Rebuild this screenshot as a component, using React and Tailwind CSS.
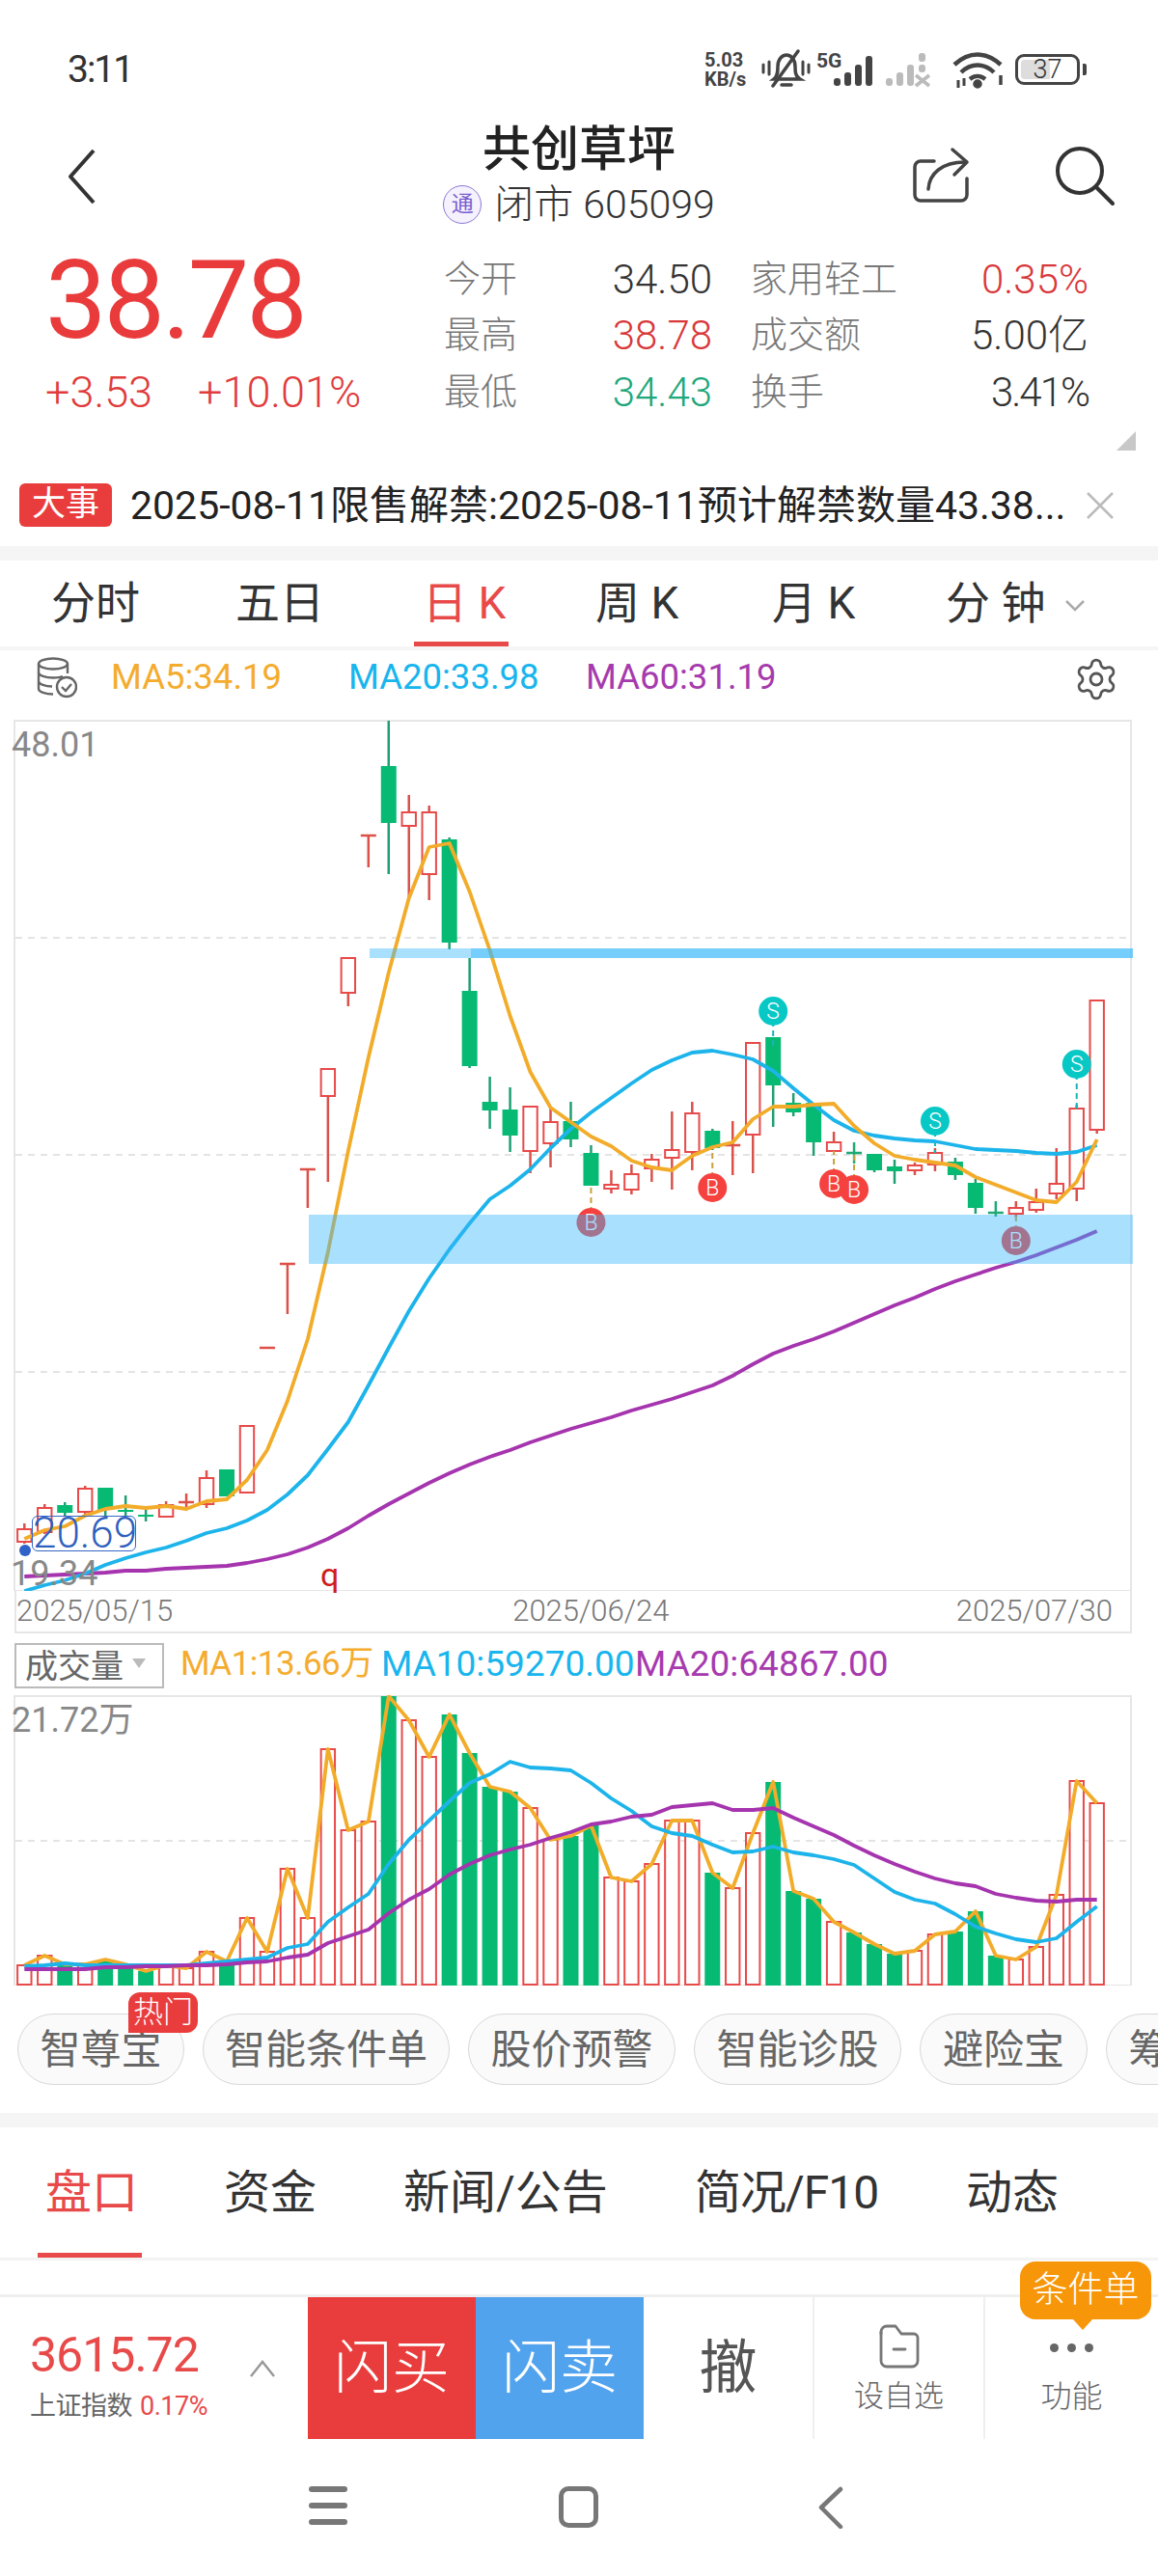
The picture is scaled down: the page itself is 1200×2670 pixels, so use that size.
import React from "react";
import { Settings } from "lucide-react";

const RED = "#e84a4a";
const GREEN = "#07ba73";
const ORANGE = "#f2ac2a";
const BLUE = "#1cb4ea";
const PURPLE = "#a534ae";

const X = (i) => 25.3 + 20.97 * i;

// kind, body top, body bottom, wick top, wick bottom
const candles = [
  ["r", 1585, 1598, 1579, 1600],
  ["r", 1563, 1588, 1559, 1590],
  ["g", 1560, 1568, 1557, 1572],
  ["r", 1543, 1567, 1540, 1571],
  ["g", 1542, 1565, 1542, 1571],
  ["g", 1565, 1567, 1550, 1571],
  ["g", 1570, 1572, 1563, 1577],
  ["r", 1560, 1572, 1556, 1572],
  ["c", 1557, 1558, 1548, 1563],
  ["r", 1532, 1559, 1524, 1563],
  ["g", 1523, 1551, 1523, 1551],
  ["r", 1478, 1547, 1478, 1547],
  ["c", 1397, 1398, 1397, 1398],
  ["c", 1310, 1311, 1310, 1362],
  ["c", 1212, 1213, 1212, 1252],
  ["r", 1108, 1136, 1108, 1225],
  ["r", 993, 1029, 993, 1043],
  ["c", 866, 867, 866, 899],
  ["g", 794, 853, 747, 906],
  ["r", 842, 856, 824, 930],
  ["r", 842, 906, 835, 933],
  ["g", 870, 977, 868, 984],
  ["g", 1027, 1105, 993, 1107],
  ["g", 1142, 1151, 1116, 1170],
  ["g", 1150, 1177, 1127, 1194],
  ["r", 1147, 1193, 1147, 1216],
  ["r", 1163, 1185, 1148, 1210],
  ["g", 1162, 1181, 1142, 1189],
  ["g", 1195, 1229, 1187, 1229],
  ["r", 1228, 1232, 1213, 1237],
  ["r", 1217, 1233, 1207, 1238],
  ["r", 1202, 1211, 1196, 1225],
  ["r", 1192, 1200, 1152, 1233],
  ["r", 1154, 1194, 1142, 1213],
  ["g", 1172, 1190, 1170, 1192],
  ["c", 1187, 1188, 1162, 1218],
  ["r", 1081, 1176, 1081, 1216],
  ["g", 1075, 1125, 1075, 1168],
  ["g", 1143, 1153, 1133, 1157],
  ["g", 1143, 1184, 1143, 1198],
  ["r", 1184, 1193, 1173, 1193],
  ["k", 1195, 1196, 1184, 1206],
  ["g", 1196, 1213, 1196, 1215],
  ["g", 1209, 1214, 1202, 1227],
  ["r", 1208, 1213, 1205, 1218],
  ["r", 1195, 1207, 1190, 1214],
  ["g", 1204, 1218, 1200, 1223],
  ["g", 1226, 1252, 1222, 1258],
  ["k", 1257, 1258, 1245, 1261],
  ["r", 1252, 1258, 1245, 1262],
  ["r", 1246, 1254, 1232, 1257],
  ["r", 1227, 1237, 1190, 1243],
  ["r", 1149, 1232, 1145, 1245],
  ["r", 1037, 1171, 1037, 1175],
];

const ma5 = [1595, 1586, 1582, 1571, 1564, 1561, 1563, 1561, 1564, 1556, 1554, 1534, 1503, 1452, 1388, 1298, 1193, 1096, 1008, 931, 878, 874, 924, 985, 1053, 1111, 1148, 1163, 1178, 1188, 1203, 1210, 1213, 1198, 1189, 1184, 1160, 1147, 1147, 1145, 1144, 1167, 1185, 1198, 1202, 1205, 1208, 1220, 1228, 1236, 1244, 1246, 1225, 1181];
const ma20 = [1649, 1643, 1638, 1631, 1622, 1615, 1609, 1604, 1597, 1589, 1584, 1576, 1565, 1549, 1529, 1502, 1474, 1436, 1397, 1359, 1325, 1295, 1268, 1243, 1229, 1212, 1190, 1170, 1153, 1138, 1123, 1109, 1099, 1091, 1089, 1093, 1098, 1110, 1128, 1145, 1161, 1172, 1177, 1180, 1182, 1183, 1187, 1191, 1192, 1193, 1195, 1196, 1194, 1187];
const ma60 = [1634, 1633, 1632, 1631, 1630, 1628, 1628, 1626, 1625, 1624, 1623, 1620, 1616, 1611, 1604, 1595, 1584, 1571, 1559, 1548, 1537, 1527, 1518, 1510, 1503, 1495, 1488, 1481, 1475, 1469, 1462, 1456, 1450, 1443, 1436, 1426, 1414, 1403, 1395, 1388, 1380, 1371, 1362, 1353, 1345, 1336, 1328, 1321, 1314, 1308, 1301, 1293, 1285, 1276];

// volume tops, read off the chart
const vol = [
  ["r", 2037], ["r", 2027], ["g", 2036], ["r", 2036], ["g", 2031], ["g", 2036], ["g", 2043], ["r", 2037], ["r", 2040],
  ["r", 2023], ["g", 2033], ["r", 1988], ["r", 2023], ["r", 1937], ["r", 1988], ["r", 1813], ["r", 1897], ["r", 1888],
  ["g", 1758], ["r", 1783], ["r", 1821], ["g", 1777], ["g", 1817], ["g", 1852], ["g", 1857], ["r", 1874], ["r", 1907],
  ["g", 1903], ["g", 1892], ["r", 1946], ["r", 1950], ["r", 1932], ["r", 1887], ["r", 1887], ["g", 1941], ["r", 1957],
  ["r", 1900], ["g", 1847], ["g", 1960], ["g", 1968], ["r", 1992], ["g", 2003], ["g", 2015], ["g", 2025], ["r", 2022],
  ["r", 2005], ["g", 2002], ["g", 1981], ["g", 2027], ["r", 2031], ["r", 2018], ["r", 1964], ["r", 1846], ["r", 1869],
];
const vma10 = [2038, 2037, 2035, 2037, 2037, 2037, 2037, 2037, 2037, 2035, 2033, 2031, 2029, 2019, 2015, 1992, 1977, 1963, 1932, 1907, 1887, 1867, 1848, 1839, 1826, 1832, 1833, 1835, 1848, 1864, 1877, 1893, 1900, 1903, 1912, 1920, 1919, 1914, 1920, 1923, 1927, 1933, 1947, 1961, 1969, 1973, 1984, 1997, 2004, 2010, 2013, 2009, 1992, 1976];
const vma20 = [2041, 2041, 2041, 2041, 2039, 2039, 2038, 2038, 2037, 2037, 2036, 2034, 2033, 2029, 2026, 2014, 2007, 2000, 1983, 1969, 1958, 1943, 1932, 1923, 1917, 1912, 1905, 1899, 1891, 1888, 1883, 1881, 1873, 1871, 1869, 1876, 1876, 1874, 1884, 1893, 1902, 1913, 1923, 1932, 1940, 1947, 1952, 1955, 1963, 1967, 1970, 1971, 1969, 1969];

const line = (ys) => ys.map((y, i) => `${X(i).toFixed(1)},${y}`).join(" ");

function Candle({ c, i }) {
  const [kind, top, bot, wt, wb] = c;
  const x = X(i);
  if (kind === "c" || kind === "k") {
    const col = kind === "c" ? "#dc5048" : "#1faa74";
    return (
      <g stroke={col} strokeWidth="2.5">
        <line x1={x - 8} x2={x + 8} y1={top} y2={top} />
        <line x1={x} x2={x} y1={wt} y2={wb} />
      </g>
    );
  }
  if (kind === "g") {
    return (
      <g>
        <line x1={x} x2={x} y1={wt} y2={wb} stroke="#1f9f72" strokeWidth="2.5" />
        <rect x={x - 8} y={top} width="16" height={bot - top} fill={GREEN} />
      </g>
    );
  }
  return (
    <g>
      <line x1={x} x2={x} y1={wt} y2={wb} stroke="#d8524c" strokeWidth="2.5" />
      <rect x={x - 7.2} y={top} width="14.4" height={bot - top} fill="#fff" stroke={RED} strokeWidth="2" />
    </g>
  );
}

function Marker({ i, y, stemTo, t }) {
  const x = X(i);
  const col = t === "S" ? "#08c8c6" : "#f5423f";
  return (
    <g>
      <line x1={x} x2={x} y1={y} y2={stemTo} stroke={t === "S" ? "#19b5bb" : "#c9a13c"} strokeWidth="2" strokeDasharray="6 4" />
      <circle cx={x} cy={y} r="15" fill={col} />
      <text x={x} y={y + 8} textAnchor="middle" fontSize="23" fill="#fff" fontWeight="300">{t}</text>
    </g>
  );
}

function KChart() {
  return (
    <div className="relative h-[903px]">
      <svg width="1200" height="903" viewBox="0 746 1200 903" className="block">
        <path d="M15 1649V747H1172V1649H15" fill="none" stroke="#e6e6e6" strokeWidth="2" />
        {[972, 1197, 1422].map((y) => (
          <line key={y} x1="16" x2="1171" y1={y} y2={y} stroke="#dcdcdc" strokeWidth="1.5" strokeDasharray="7 6" />
        ))}
        {candles.map((c, i) => (
          <Candle key={i} c={c} i={i} />
        ))}
        <Marker i={28} y={1267} stemTo={1229} t="B" />
        <Marker i={34} y={1231} stemTo={1190} t="B" />
        <Marker i={40} y={1227} stemTo={1193} t="B" />
        <Marker i={41} y={1233} stemTo={1196} t="B" />
        <Marker i={49} y={1286} stemTo={1258} t="B" />
        <Marker i={37} y={1048} stemTo={1085} t="S" />
        <Marker i={45} y={1162} stemTo={1195} t="S" />
        <Marker i={52} y={1103} stemTo={1149} t="S" />
        <polyline points={line(ma60)} fill="none" stroke={PURPLE} strokeWidth="3.8" strokeLinejoin="round" />
        <polyline points={line(ma20)} fill="none" stroke={BLUE} strokeWidth="3.8" strokeLinejoin="round" />
        <polyline points={line(ma5)} fill="none" stroke={ORANGE} strokeWidth="3.8" strokeLinejoin="round" />
        {/* support and resistance zones sit over the candles */}
        <rect x="320" y="1259" width="854" height="51" fill="#35b7fb" opacity="0.43" />
        <rect x="383" y="983" width="791" height="10" fill="#35b7fb" opacity="0.43" />
        <rect x="488" y="983" width="686" height="10" fill="#35b7fb" opacity="0.43" />
        <circle cx="26" cy="1607" r="6" fill="#2f62c8" />
      </svg>
      <div className="absolute left-[12px] top-[4px] text-[36px] leading-[44px] text-[#888]">48.01</div>
      <div className="absolute left-[11px] top-[867px] h-[36px] text-[36px] leading-[36px] text-[#888]">19.34</div>
      <div className="absolute left-[33px] top-[825px] h-[37px] w-[108px] rounded-[6px] border border-[#3566c4] text-center text-[44px] leading-[35px] font-light text-[#2f5fbe]">20.69</div>
      <div className="absolute left-[332px] top-[868px] text-[34px] leading-[36px] text-[#d01c1c]">q</div>
    </div>
  );
}

function VolumeChart() {
  return (
    <div className="relative h-[301px]">
      <svg width="1200" height="301" viewBox="0 1757 1200 301" className="block">
        <path d="M15 2058V1758H1172V2058H15" fill="none" stroke="#e6e6e6" strokeWidth="2" />
        <line x1="16" x2="1171" y1="1908" y2="1908" stroke="#dcdcdc" strokeWidth="1.5" strokeDasharray="7 6" />
        {vol.map(([k, top], i) =>
          k === "g" ? (
            <rect key={i} x={X(i) - 8} y={top} width="16" height={2058 - top} fill={GREEN} />
          ) : (
            <rect key={i} x={X(i) - 7.2} y={top} width="14.4" height={2057 - top} fill="#fff" stroke={RED} strokeWidth="2" />
          )
        )}
        <polyline points={line(vol.map((v) => v[1]))} fill="none" stroke={ORANGE} strokeWidth="3.8" strokeLinejoin="round" />
        <polyline points={line(vma10)} fill="none" stroke={BLUE} strokeWidth="3.8" strokeLinejoin="round" />
        <polyline points={line(vma20)} fill="none" stroke={PURPLE} strokeWidth="3.8" strokeLinejoin="round" />
      </svg>
      <div className="absolute left-[12px] top-[4px] text-[36px] leading-[44px] text-[#888]">21.72万</div>
    </div>
  );
}

function StatusBar() {
  return (
    <div className="flex h-[100px] items-start pt-[51px] pl-[70px] text-[#333]">
      <div className="w-[660px] text-[39px] leading-[42px] tracking-[-2px]">3:11</div>
      <div className="flex h-[42px] items-center">
        <div className="w-[58px] text-[20px] leading-[20px] font-bold text-[#444]">
          <div>5.03</div>
          <div>KB/s</div>
        </div>
        <svg width="52" height="42" viewBox="0 0 52 42" fill="none" stroke="#444" strokeWidth="3.5" strokeLinecap="round">
          <path d="M14 31c4-3 4-8 4-13 0-7 4-12 9-12s9 5 9 12c0 5 0 10 5 13z" />
          <path d="M22 37h10" />
          <path d="M39 2L13 38" />
          <path d="M3 16v8M9 13v13M44 13v13M50 16v8" strokeWidth="3" />
        </svg>
        <div className="relative ml-[6px] h-[38px] w-[68px]">
          <div className="absolute left-[0px] top-[0px] text-[21px] leading-[20px] font-bold text-[#444]">5G</div>
          <svg width="68" height="38" viewBox="0 0 68 38" className="block">
            <rect x="18" y="28" width="7" height="8" rx="3" fill="#444" />
            <rect x="29" y="22" width="7" height="14" rx="3" fill="#444" />
            <rect x="40" y="14" width="7" height="22" rx="3" fill="#444" />
            <rect x="51" y="5" width="7" height="31" rx="3" fill="#444" />
          </svg>
        </div>
        <svg width="56" height="38" viewBox="0 0 56 38" className="ml-[2px]" fill="#bbb">
          <rect x="2" y="28" width="7" height="8" rx="3" />
          <rect x="13" y="22" width="7" height="14" rx="3" />
          <rect x="24" y="14" width="7" height="22" rx="3" />
          <rect x="36" y="14" width="7" height="8" rx="3" />
          <rect x="36" y="2" width="7" height="9" rx="3" />
          <path d="M33 25l14 11M47 25l-14 11" stroke="#bbb" strokeWidth="3.5" />
        </svg>
        <svg width="60" height="42" viewBox="0 0 60 42" fill="none" stroke="#444" strokeWidth="4.5" className="ml-[12px]">
          <path d="M5 16C20 2 38 2 53 16" />
          <path d="M12 24C22 14 36 14 46 24" />
          <path d="M21 31C26 27 32 27 37 31" />
          <circle cx="29" cy="36" r="2.5" fill="#444" />
          <path d="M9 32v8M15 30v8" strokeWidth="3" />
          <path d="M53 27v10" strokeWidth="3.5" />
        </svg>
        <div className="relative ml-[8px] flex h-[32px] w-[67px] items-center justify-center overflow-hidden rounded-[9px] border-[3px] border-[#444]">
          <div className="absolute left-[3px] top-[3px] h-[20px] w-[30px] rounded-l-[4px] bg-[#ddd]" />
          <span className="relative text-[27px] leading-[26px] font-light">37</span>
        </div>
        <div className="ml-[3px] h-[12px] w-[4px] rounded-r-[2px] bg-[#444]" />
      </div>
    </div>
  );
}

function Header() {
  return (
    <div className="relative flex h-[140px] flex-col items-center">
      <div className="mt-[29px] text-[50px] leading-[52px] font-medium text-[#222]">共创草坪</div>
      <div className="mt-[9px] flex h-[44px] items-center">
        <div className="flex h-[40px] w-[40px] items-center justify-center rounded-full border border-[#8d78d8] bg-[#f5f2fd] text-[23px] text-[#7a60d0]">通</div>
        <div className="ml-[13px] text-[41px] leading-[44px] font-light text-[#333]">闭市 605099</div>
      </div>
      <svg width="34" height="60" viewBox="0 0 34 60" fill="none" stroke="#333" strokeWidth="4" className="absolute left-[68px] top-[52px]">
        <path d="M29 4L5 31l24 27" strokeLinejoin="round" />
      </svg>
      <svg width="62" height="62" viewBox="0 0 62 62" fill="none" stroke="#444" strokeWidth="3.5" strokeLinecap="round" strokeLinejoin="round" className="absolute left-[944px] top-[52px]">
        <path d="M24 15H10a6 6 0 0 0-6 6v29a6 6 0 0 0 6 6h42a6 6 0 0 0 6-6V33" />
        <path d="M18 44c1-16 14-28 38-28" />
        <path d="M43 3l15 13-13 13" />
      </svg>
      <svg width="66" height="64" viewBox="0 0 66 64" fill="none" stroke="#333" strokeWidth="4" strokeLinecap="round" className="absolute left-[1092px] top-[50px]">
        <circle cx="27" cy="27" r="23" />
        <path d="M44 44l17 17" />
      </svg>
    </div>
  );
}

function StatRow({ l1, v1, c1, l2, v2, c2 }) {
  return (
    <div className="flex h-[58.500px] items-center text-[38px]">
      <div className="flex w-[278px] items-center justify-between">
        <span className="font-light text-[#777]">{l1}</span>
        <span className={"text-[42px] font-light " + c1}>{v1}</span>
      </div>
      <div className="ml-[40px] flex w-[350px] items-center justify-between">
        <span className="font-light text-[#777]">{l2}</span>
        <span className={"text-[42px] font-light " + c2}>{v2}</span>
      </div>
    </div>
  );
}

function Quote() {
  return (
    <div className="relative flex h-[250px] pt-[20px]">
      <div className="w-[460px] pl-[47px]">
        <div className="mt-[-3px] text-[113px] leading-[110px] tracking-[-3px] text-[#e93b3b]">38.78</div>
        <div className="mt-[14px] flex text-[45px] leading-[52px] font-light text-[#e03c3c]">
          <span className="w-[158px]">+3.53</span>
          <span>+10.01%</span>
        </div>
      </div>
      <div>
        <StatRow l1="今开" v1="34.50" c1="text-[#333]" l2="家用轻工" v2="0.35%" c2="text-[#d9383a]" />
        <StatRow l1="最高" v1="38.78" c1="text-[#d9383a]" l2="成交额" v2="5.00亿" c2="text-[#333]" />
        <StatRow l1="最低" v1="34.43" c1="text-[#1ea77a]" l2="换手" v2="3.41%" c2="tracking-[-2px] text-[#333]" />
      </div>
      <div className="absolute left-[1157px] top-[207px] h-0 w-0 border-b-[20px] border-l-[20px] border-b-[#c8c8c8] border-l-transparent" />
    </div>
  );
}

function Notice() {
  return (
    <div className="flex h-[76px] items-start pt-[11px] pl-[20px]">
      <div className="flex h-[45px] w-[96px] items-center justify-center rounded-[6px] bg-[#e93d3d] text-[35px] text-white">大事</div>
      <div className="ml-[19px] w-[990px] text-[41px] leading-[46px] whitespace-nowrap text-[#222]">2025-08-11限售解禁:2025-08-11预计解禁数量43.38...</div>
      <svg width="30" height="30" viewBox="0 0 30 30" stroke="#bbb" strokeWidth="2.5" className="mt-[8px]">
        <path d="M2 2l26 26M28 2L2 28" />
      </svg>
    </div>
  );
}

function MainTabs() {
  return (
    <div className="relative flex h-[89px] items-center text-[46px] text-[#333]">
      <span className="absolute left-[53px]">分时</span>
      <span className="absolute left-[244px]">五日</span>
      <span className="absolute left-[438px] text-[#e84a4a]">日 K</span>
      <span className="absolute left-[617px]">周 K</span>
      <span className="absolute left-[800px]">月 K</span>
      <span className="absolute left-[980px]">分 钟</span>
      <svg width="22" height="14" viewBox="0 0 22 14" fill="none" stroke="#aaa" strokeWidth="2.5" className="absolute left-[1103px] top-[40px]">
        <path d="M2 2l9 9 9-9" />
      </svg>
      <div className="absolute bottom-0 left-[429px] h-[5px] w-[98px] bg-[#e84a4a]" />
    </div>
  );
}

function MaRow() {
  return (
    <div className="flex h-[72px] items-start pt-[6px] pl-[38px] text-[36.500px] leading-[44px]">
      <svg width="42" height="44" viewBox="0 0 42 44" fill="none" stroke="#666" strokeWidth="2.4">
        <ellipse cx="17" cy="8" rx="15" ry="5.5" />
        <path d="M2 8v26c0 3 7 5.500 15 5.500M32 8v10M2 17c0 3 7 5.500 15 5.500 4 0 8-.5 10-1.500M2 26c0 3 7 5.500 14 5.500" />
        <circle cx="31" cy="32" r="10" />
        <path d="M26 32l4 4 6-7" />
      </svg>
      <span className="ml-[35px] w-[246px] text-[#f4ac2e]">MA5:34.19</span>
      <span className="w-[246px] text-[#18b5ee]">MA20:33.98</span>
      <span className="flex-1 text-[#a63aae]">MA60:31.19</span>
      <Settings size={48} strokeWidth={1.4} color="#555" className="mr-[40px]" />
    </div>
  );
}

function Chip({ label, w, badge }) {
  return (
    <div className={"relative flex h-[74px] shrink-0 items-center justify-center rounded-full border border-[#d8d8d8] bg-[#fafafa] text-[42px] text-[#666] " + w}>
      {label}
      {badge && (
        <div className="absolute left-[114px] top-[-23px] flex h-[42px] w-[72px] items-center justify-center rounded-[12px] rounded-bl-none bg-[#e93d3d] text-[31px] font-light text-white">热门</div>
      )}
    </div>
  );
}

function InfoTabs() {
  return (
    <div className="relative h-[135px] text-[48px] leading-[135px] text-[#333]">
      <span className="absolute left-[47px] top-0 text-[#e84a4a]">盘口</span>
      <span className="absolute left-[232px] top-0">资金</span>
      <span className="absolute left-[418px] top-0">新闻/公告</span>
      <span className="absolute left-[720px] top-0 tracking-[-1px]">简况/F10</span>
      <span className="absolute left-[1001px] top-0">动态</span>
      <div className="absolute bottom-0 left-[39px] h-[5px] w-[108px] bg-[#e84a4a]" />
    </div>
  );
}

function Toolbar() {
  return (
    <div className="relative flex h-[147px]">
      <div className="flex w-[319px] items-center pl-[31px]">
        <div className="w-[227px] pt-[14px]">
          <div className="text-[50px] leading-[54px] tracking-[-1px] text-[#e84a4a]">3615.72</div>
          <div className="mt-[10px] flex items-center text-[27px] leading-[32px] tracking-[-0.5px] text-[#666]">
            上证指数<span className="ml-[8px] text-[#e84a4a]">0.17%</span>
          </div>
        </div>
        <svg width="28" height="20" viewBox="0 0 28 20" fill="none" stroke="#999" strokeWidth="2.5">
          <path d="M2 18L14 3l12 15" />
        </svg>
      </div>
      <div className="flex w-[174px] items-center justify-center bg-[#e93d3d] text-[60px] font-light text-white">闪买</div>
      <div className="flex w-[174px] items-center justify-center bg-[#52a3ee] text-[60px] font-light text-white">闪卖</div>
      <div className="flex w-[175px] items-center justify-center text-[60px] text-[#555]">撤</div>
      <div className="flex w-[177px] flex-col items-center border-l-2 border-[#efefef] pt-[28px]">
        <svg width="42" height="46" viewBox="0 0 42 46" fill="none" stroke="#777" strokeWidth="2.8" strokeLinejoin="round">
          <path d="M2 8a6 6 0 0 1 6-6h9l6 8h13a4 4 0 0 1 4 4v24a6 6 0 0 1-6 6H8a6 6 0 0 1-6-6z" />
          <path d="M2 10V8M15 26h12" strokeLinecap="round" />
        </svg>
        <div className="mt-[11px] text-[31px] leading-[36px] font-light text-[#666]">设自选</div>
      </div>
      <div className="flex flex-1 flex-col items-center border-l-2 border-[#efefef] pt-[48px]">
        <div className="flex h-[10px] gap-[9px]">
          <div className="h-[9px] w-[9px] rounded-full bg-[#666]" />
          <div className="h-[9px] w-[9px] rounded-full bg-[#666]" />
          <div className="h-[9px] w-[9px] rounded-full bg-[#666]" />
        </div>
        <div className="mt-[27px] text-[32px] leading-[36px] font-light text-[#666]">功能</div>
      </div>
      {/* 条件单 tip hangs over the top edge of the toolbar */}
      <div className="absolute left-[1057px] top-[-37px] flex h-[60px] w-[136px] items-center justify-center rounded-[16px] bg-[#f79608] text-[37px] font-light text-white">条件单</div>
      <div className="absolute left-[1112px] top-[23px] h-0 w-0 border-x-[10px] border-t-[11px] border-x-transparent border-t-[#f79608]" />
    </div>
  );
}

function NavBar() {
  return (
    <div className="flex h-[142px] items-start pt-[49px] pl-[320px]">
      <div className="flex h-[40px] w-[40px] flex-col justify-between">
        <div className="h-[6px] rounded-full bg-[#777]" />
        <div className="h-[6px] rounded-full bg-[#777]" />
        <div className="h-[6px] rounded-full bg-[#777]" />
      </div>
      <div className="ml-[219px] h-[43px] w-[41px] rounded-[10px] border-[5px] border-[#777]" />
      <svg width="28" height="44" viewBox="0 0 28 44" fill="none" stroke="#777" strokeWidth="4.5" strokeLinecap="round" strokeLinejoin="round" className="ml-[226px]">
        <path d="M25 3L5 22l20 20" />
      </svg>
    </div>
  );
}

export default function App() {
  return (
    <div className="h-[2670px] w-[1200px] overflow-hidden bg-white [font-family:Roboto,'Noto_Sans_CJK_SC',sans-serif]">
      <StatusBar />
      <Header />
      <Quote />
      <Notice />
      <div className="h-[15px] bg-[#f5f5f5]" />
      <MainTabs />
      <div className="h-[4px] bg-[#f5f5f5]" />
      <MaRow />
      <KChart />
      <div className="ml-[15px] flex h-[44px] w-[1158px] items-center border-x-2 border-b-2 border-[#e6e6e6] text-[31px] font-light text-[#777]">
        <span>2025/05/15</span>
        <span className="ml-[352px]">2025/06/24</span>
        <span className="ml-auto pr-[18px]">2025/07/30</span>
      </div>
      <div className="flex h-[64px] items-start pt-[10px] pl-[15px] text-[37px] leading-[44px]">
        <div className="flex h-[47px] w-[155px] items-center border-2 border-[#bbb] pl-[9px] text-[34px] text-[#666]">
          成交量
          <div className="mt-[-6px] ml-[9px] h-0 w-0 border-x-[7px] border-t-[10px] border-x-transparent border-t-[#bbb]" />
        </div>
        <span className="ml-[17px] w-[208px] text-[35px] tracking-[-0.5px] whitespace-nowrap text-[#f4ac2e]">MA1:13.66万</span>
        <span className="w-[263px] text-[#18b5ee]">MA10:59270.00</span>
        <span className="text-[#a63aae]">MA20:64867.00</span>
      </div>
      <VolumeChart />
      <div className="flex h-[132px] gap-[19px] overflow-hidden pt-[29px] pl-[18px]">
        <Chip label="智尊宝" w="w-[173px]" badge />
        <Chip label="智能条件单" w="w-[256px]" />
        <Chip label="股价预警" w="w-[215px]" />
        <Chip label="智能诊股" w="w-[215px]" />
        <Chip label="避险宝" w="w-[174px]" />
        <Chip label="筹码分布" w="w-[215px]" />
      </div>
      <div className="h-[15px] bg-[#f5f5f5]" />
      <InfoTabs />
      <div className="h-[3px] bg-[#f3f3f3]" />
      <div className="h-[35px]" />
      <div className="h-[3px] bg-[#efefef]" />
      <Toolbar />
      <NavBar />
    </div>
  );
}
